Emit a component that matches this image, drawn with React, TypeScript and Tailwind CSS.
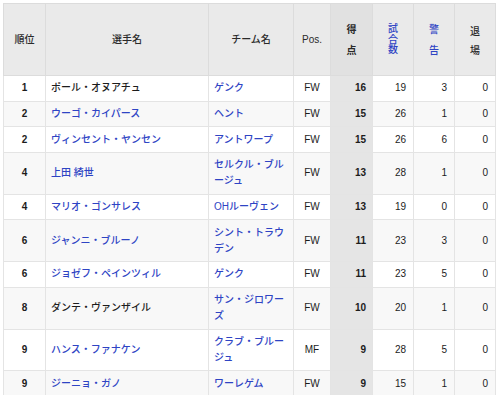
import React from "react";

type Row = {
  rank: string;
  name: string;
  nameLink: boolean;
  team: string;
  pos: string;
  g: string;
  m: string;
  y: string;
  r: string;
};

const rows: Row[] = [
  { rank: "1", name: "ポール・オヌアチュ", nameLink: false, team: "ゲンク", pos: "FW", g: "16", m: "19", y: "3", r: "0" },
  { rank: "2", name: "ウーゴ・カイパース", nameLink: true, team: "ヘント", pos: "FW", g: "15", m: "26", y: "1", r: "0" },
  { rank: "2", name: "ヴィンセント・ヤンセン", nameLink: true, team: "アントワープ", pos: "FW", g: "15", m: "26", y: "6", r: "0" },
  { rank: "4", name: "上田 綺世", nameLink: true, team: "セルクル・ブルージュ", pos: "FW", g: "13", m: "28", y: "1", r: "0" },
  { rank: "4", name: "マリオ・ゴンサレス", nameLink: true, team: "OHルーヴェン", pos: "FW", g: "13", m: "19", y: "0", r: "0" },
  { rank: "6", name: "ジャンニ・ブルーノ", nameLink: true, team: "シント・トラウデン", pos: "FW", g: "11", m: "23", y: "3", r: "0" },
  { rank: "6", name: "ジョゼフ・ペインツィル", nameLink: true, team: "ゲンク", pos: "FW", g: "11", m: "23", y: "5", r: "0" },
  { rank: "8", name: "ダンテ・ヴァンザイル", nameLink: false, team: "サン・ジロワーズ", pos: "FW", g: "10", m: "20", y: "1", r: "0" },
  { rank: "9", name: "ハンス・ファナケン", nameLink: true, team: "クラブ・ブルージュ", pos: "MF", g: "9", m: "28", y: "5", r: "0" },
  { rank: "9", name: "ジーニョ・ガノ", nameLink: true, team: "ワーレゲム", pos: "FW", g: "9", m: "15", y: "1", r: "0" },
];

const font = { fontFamily: '"Liberation Sans", "Noto Sans CJK JP", sans-serif' };

export default function App() {
  const th = "border border-[#dcdcdc] bg-[#eaeaea] text-[#2a2a2a] font-medium text-center align-middle p-0";
  const td = "border border-[#e4e4e4] py-[4.35px] leading-[16px] align-middle";
  const link = "text-[#2e44c4]";
  return (
    <div className="bg-white w-[500px] h-[395px] overflow-hidden pt-[3px] pl-[3px]" style={font}>
      <table className="table-fixed border-collapse w-[492px] text-[10px] text-[#1c1c1c] font-medium">
        <colgroup>
          <col className="w-[42px]" />
          <col className="w-[163px]" />
          <col className="w-[85px]" />
          <col className="w-[37px]" />
          <col className="w-[42px]" />
          <col className="w-[41px]" />
          <col className="w-[41px]" />
          <col className="w-[41px]" />
        </colgroup>
        <thead>
          <tr className="h-[72px]">
            <th className={th}>順位</th>
            <th className={th}>選手名</th>
            <th className={th}>チーム名</th>
            <th className={`${th} font-normal`}>Pos.</th>
            <th className={`${th} !bg-[#e1e1e1] !font-bold`}>
              <div className="leading-[21px]">得<br />点</div>
            </th>
            <th className={th}>
              <div className={`leading-[10.5px] ${link} pt-[1px]`}>試<br />合<br />数</div>
            </th>
            <th className={th}>
              <div className={`leading-[21px] ${link}`}>警<br />告</div>
            </th>
            <th className={th}>
              <div className="leading-[19px] pt-[2px]">退<br />場</div>
            </th>
          </tr>
        </thead>
        <tbody>
          {rows.map((r, i) => (
            <tr key={i} className={i % 2 === 1 ? "bg-[#f8f8f8]" : "bg-white"}>
              <td className={`${td} text-center font-bold`}>{r.rank}</td>
              <td className={`${td} px-[5px] ${r.nameLink ? link : "text-[#1c1c1c]"}`}>{r.name}</td>
              <td className={`${td} px-[5px] ${link}`}>{r.team}</td>
              <td className={`${td} text-center`}>{r.pos}</td>
              <td className={`${td} text-right pr-[6px] font-bold bg-[#e5e5e5]`}>{r.g}</td>
              <td className={`${td} text-right pr-[7px]`}>{r.m}</td>
              <td className={`${td} text-right pr-[7px]`}>{r.y}</td>
              <td className={`${td} text-right pr-[7px]`}>{r.r}</td>
            </tr>
          ))}
        </tbody>
      </table>
    </div>
  );
}
